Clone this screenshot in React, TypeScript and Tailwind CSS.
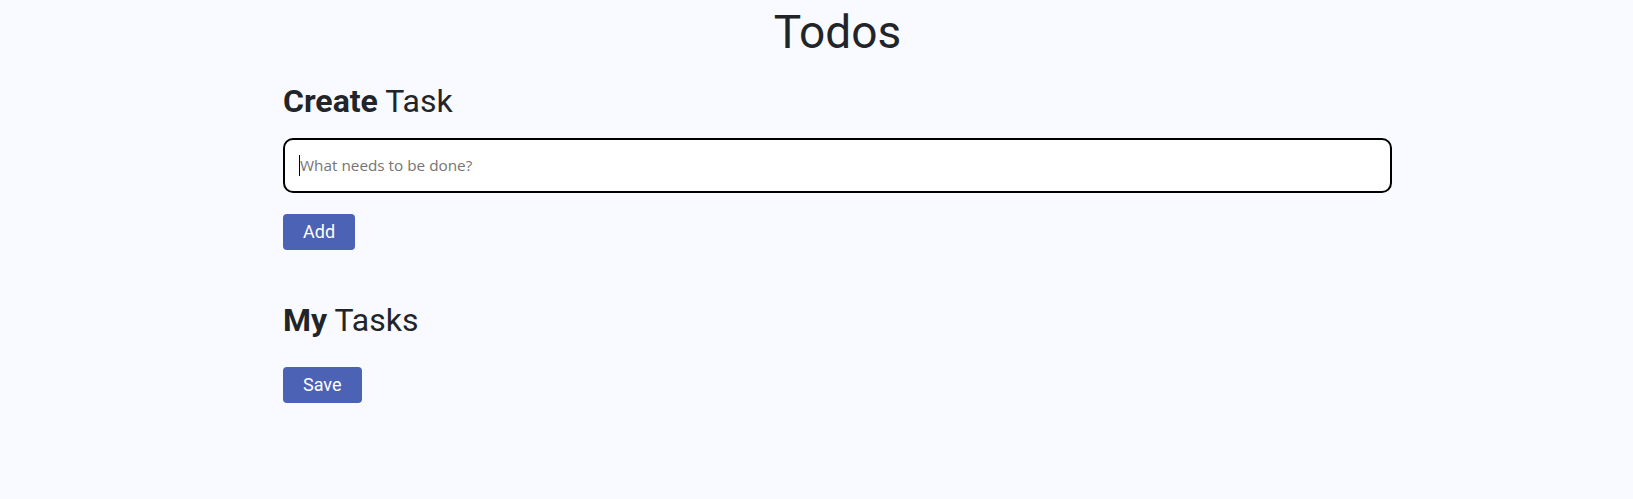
import React from "react";

export default function App() {
  return (
    <div className="min-h-[499px] w-full bg-[#f9faff] text-[#212529]" style={{ fontFamily: "Roboto, 'Liberation Sans', sans-serif" }}>
      <div className="ml-[283px] w-[1109px] pt-[5px]">
        <h1 className="text-center text-[46px] font-normal leading-[1.2]">Todos</h1>
        <h2 className="mt-[22px] text-[32px] font-normal leading-[1.2]">
          <span className="font-bold">Create</span> Task
        </h2>
        <div className="relative mt-[17px]">
          <input
            type="text"
            placeholder="What needs to be done?"
            className="block h-[55px] w-full rounded-[10px] border-2 border-black bg-white px-[15px] text-[15.3px] text-[#212529] placeholder:text-[#757575] outline-none"
            style={{ fontFamily: "'Open Sans', 'Noto Sans', sans-serif" }}
          />
          <span className="pointer-events-none absolute left-[16px] top-[17px] h-[21px] w-[1px] bg-black" />
        </div>
        <button className="mt-[21px] block h-[36px] rounded-[4px] bg-[#4b62b5] px-[20px] text-[18px] leading-none text-white">
          Add
        </button>
        <h2 className="mt-[51px] text-[32px] font-normal leading-[1.2]">
          <span className="font-bold">My</span> Tasks
        </h2>
        <button className="mt-[28px] block h-[36px] rounded-[4px] bg-[#4b62b5] px-[20px] text-[18px] leading-none text-white">
          Save
        </button>
      </div>
    </div>
  );
}
